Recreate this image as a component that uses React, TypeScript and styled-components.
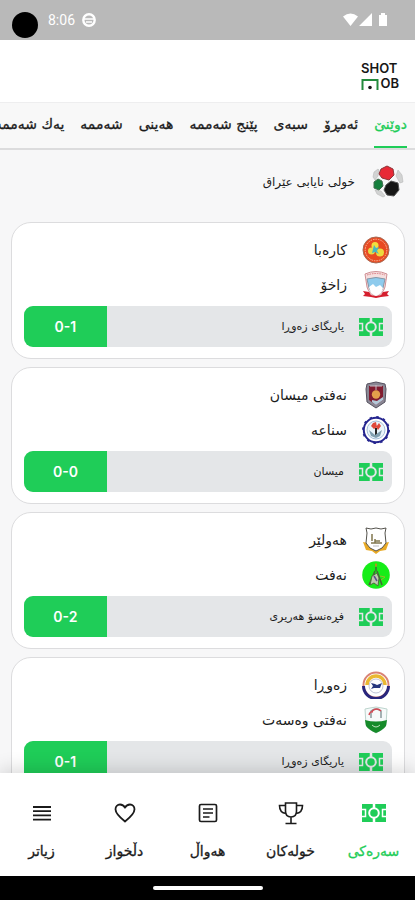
import React from "react";
import styled, { createGlobalStyle } from "styled-components";

const GREEN = "#1fcd58";

const GlobalStyle = createGlobalStyle`
  * { box-sizing: border-box; }
  body { margin: 0; background: #f7f7f8; font-family: "DejaVu Sans", "Noto Sans", sans-serif; color: #1b1b1b; }
  button { font: inherit; color: inherit; background: none; border: 0; padding: 0; cursor: pointer; }
`;

const Screen = styled.div`
  display: flex;
  flex-direction: column;
  height: 100vh;
  overflow: hidden;
`;

const StatusBar = styled.div`
  display: flex;
  align-items: center;
  flex: none;
  height: 40px;
  padding: 0 26px 0 12px;
  background: #b9b9b9;
  color: #fff;
  font: 14px/20px Roboto, sans-serif;
`;
const Camera = styled.span`
  width: 26px;
  height: 26px;
  margin: 9px 10px 0 0;
  border-radius: 50%;
  background: #000;
`;
const Clock = styled.time`
  margin-right: 7px;
`;
const SystemIcons = styled.span`
  display: flex;
  margin-left: auto;
`;

const Header = styled.header`
  display: flex;
  align-items: center;
  flex: none;
  height: 63px;
  padding: 10px 16px 0;
  background: #fff;
  border-bottom: 1px solid #eeeeef;
`;
const Brand = styled.h1`
  display: flex;
  flex-direction: column;
  width: 38px;
  margin: 0;
  direction: ltr;
  font: 600 13px/15px Inter, sans-serif;
  color: #171717;
`;
const BrandLine = styled.span`
  display: flex;
  align-items: center;
  justify-content: space-between;
`;

const Tabs = styled.nav`
  display: flex;
  flex: none;
  gap: 16px;
  height: 47px;
  padding: 0 8px;
  overflow: hidden;
  background: #f8f8f8;
  border-bottom: 2px solid #dcdcdd;
`;
const Tab = styled.button<{ $active?: boolean }>`
  flex: none;
  height: 45px;
  padding-bottom: 3px;
  white-space: nowrap;
  font-size: 14px;
  -webkit-text-stroke: 0.3px;
  ${(p) => p.$active && `color: ${GREEN}; box-shadow: inset 0 -2px ${GREEN};`}
`;

const Feed = styled.main`
  flex: 1;
  min-height: 0;
  overflow: hidden;
  padding: 0 10px 0 11px;
`;
const League = styled.h2`
  display: flex;
  align-items: center;
  gap: 16px;
  height: 72px;
  margin: 0;
  padding: 0 0 8px;
  font-size: 12px;
  font-weight: 400;
`;
const MatchList = styled.div`
  display: flex;
  flex-direction: column;
  gap: 8px;
`;
const Card = styled.article`
  padding: 9px 12px 11px;
  background: #fff;
  border: 1px solid #dcdcde;
  border-radius: 20px;
`;
const Team = styled.div`
  display: flex;
  align-items: center;
  gap: 15px;
  height: 35px;
  padding: 0 2px;
  font-size: 14px;
`;
const Result = styled.div`
  display: flex;
  align-items: center;
  gap: 14px;
  height: 41px;
  margin-top: 4px;
  padding-right: 8px;
  overflow: hidden;
  background: #e4e6e8;
  border-radius: 9px;
  font-size: 11px;
`;
const Score = styled.strong`
  display: grid;
  place-items: center;
  align-self: stretch;
  width: 23%;
  margin-right: auto;
  background: ${GREEN};
  color: #fff;
  direction: ltr;
  font: 600 14px/20px Inter, sans-serif;
`;

const BottomNav = styled.nav`
  display: grid;
  grid-template-columns: repeat(5, 1fr);
  flex: none;
  height: 103px;
  background: #fff;
  box-shadow: 0 -3px 18px rgba(0, 0, 0, 0.16);
  position: relative;
`;
const NavItem = styled.button<{ $active?: boolean }>`
  display: flex;
  flex-direction: column;
  align-items: center;
  gap: 13px;
  padding-top: 27px;
  font-size: 14px;
  line-height: 24px;
  -webkit-text-stroke: 0.3px;
  ${(p) => p.$active && `color: ${GREEN};`}
`;
const GestureBar = styled.div`
  display: grid;
  place-items: center;
  flex: none;
  height: 24px;
  background: #000;
`;
const Handle = styled.span`
  width: 110px;
  height: 4px;
  border-radius: 2px;
  background: #fff;
`;

const PitchIcon = ({ line = "#e4e6e8" }: { line?: string }) => (
  <svg width="26" height="26" viewBox="0 0 26 26" fill="none" aria-hidden="true">
    <rect x="1" y="4" width="24" height="18" fill={GREEN} />
    <path d="M13 4v4M13 18v4" stroke={line} strokeWidth="2.5" />
    <path d="M1 9.500h3.500v7H1M25 9.500h-3.500v7H25" stroke={line} strokeWidth="1.500" />
    <circle cx="13" cy="13" r="4.800" stroke={line} strokeWidth="2" />
  </svg>
);

const TrophyIcon = () => (
  <svg width="26" height="26" viewBox="0 0 26 26" fill="none" stroke="currentColor" strokeWidth="1.6" aria-hidden="true">
    <path d="M7.500 3h11v8c0 3.500-2 6-5.500 6s-5.500-2.500-5.500-6zM7.500 5.500H1.500c0 4.500 2 7.500 6.500 8M18.500 5.500h6c0 4.500-2 7.500-6.500 8M13 17v6M7.500 23.500h11" />
  </svg>
);
const NewsIcon = () => (
  <svg width="26" height="26" viewBox="0 0 26 26" fill="none" stroke="currentColor" strokeWidth="1.7" aria-hidden="true">
    <rect x="4.500" y="4.500" width="17" height="17" rx="1.500" />
    <path d="M8 9h10M8 13h10M8 17h6.500" />
  </svg>
);
const HeartIcon = () => (
  <svg width="26" height="26" viewBox="0 0 26 26" fill="none" stroke="currentColor" strokeWidth="1.8" strokeLinejoin="round" aria-hidden="true">
    <path d="M13 21.500C6 16 3.500 13 3.500 9.300 3.500 6.500 5.500 4.500 8 4.500c2.200 0 4 1.300 5 3.200 1-1.900 2.800-3.200 5-3.200 2.500 0 4.500 2 4.500 4.800 0 3.700-2.500 6.700-9.500 12.200z" />
  </svg>
);
const MoreIcon = () => (
  <svg width="26" height="26" viewBox="0 0 26 26" stroke="currentColor" strokeWidth="1.8" aria-hidden="true">
    <path d="M4 7h18M4 11.200h18M4 15.400h18M4 19.600h18" />
  </svg>
);

const LeagueBall = () => (
  <svg width="34" height="36" viewBox="0 0 34 36" aria-hidden="true">
    <g fill="#d2d3d3" stroke="#b0b0b0" strokeWidth=".5">
      <path d="M2 13 3 8l4-3 1 1-1 6-3 4zM27 6l4 5 1 7-3 1-4-7zM4 26l6 1 4 5-2 1-6-3z" />
    </g>
    <path d="m10 5 6-3 6 3 1 6-5 5-7-2-3-4z" fill="#e82936" stroke="#8b3438" />
    <path d="m3 18 4-3 4 2 1 5-4 4-5-2z" fill="#15803d" stroke="#436e50" />
    <path d="m15 21 5-4 7 2 1 7-5 6-7-1-3-5z" fill="#161616" stroke="#555" />
  </svg>
);

type CrestName = "karaba" | "zakho" | "maysan" | "sinaa" | "erbil" | "naft" | "zawraa" | "wasat";

const crestArt: Record<CrestName, React.ReactNode> = {
  karaba: (
    <>
      <circle cx="14" cy="14" r="13" fill="#e94a21" stroke="#a66a55" />
      <circle cx="14" cy="14" r="10.800" fill="none" stroke="#f7b99f" strokeDasharray="1.500 1" />
      <circle cx="13" cy="9.500" r="3.500" fill="#f1df3e" />
      <circle cx="9.500" cy="15" r="3.500" fill="#e5db48" />
      <circle cx="18" cy="16.500" r="4" fill="#ecd93f" />
      <path d="m12 9 2 3 3-1-2 4 2 3-4-2-3 1 1-4z" fill="#48b7c1" />
    </>
  ),
  zakho: (
    <>
      <path d="M3 3q11-5 22 0l-2 13q-2 7-9 10-7-3-9-10z" fill="#f5dede" stroke="#cf8f94" />
      <path d="M5 8q9-3 18 0l-2 9q-2 5-7 7-5-2-7-7z" fill="#8ecbed" stroke="#8596a5" />
      <path d="M5 4q9-3 18 0" fill="none" stroke="#d87880" strokeDasharray="1.500 1" />
      <path d="m7 16 4-3 3 3 4-2 3 3-2 5-5 3-5-3z" fill="#fff" />
      <path d="m1 20 6 1 2 3q5 2 10 0l2-3 6-1-2 3 2 2-8 1-5 1-5-1-8-1 2-2z" fill="#d51f2e" />
    </>
  ),
  maysan: (
    <>
      <path d="M5 3 14 1l9 2 1 5-1 13-9 6-9-6L4 8z" fill="#8a8794" stroke="#55515f" />
      <path d="M7 5h14v14l-7 5-7-5z" fill="#811c30" />
      <path d="M8 5h12M14 4v5" stroke="#c7bac4" />
      <circle cx="14" cy="13.500" r="4.200" fill="#e4a04b" />
      <path d="m10 19 5 1 6-4v3l-7 5-4-3z" fill="#b3c9d9" />
    </>
  ),
  sinaa: (
    <>
      <circle cx="14" cy="14" r="12.200" fill="#fff" stroke="#25258f" strokeWidth="2" />
      <circle cx="14" cy="14" r="13.200" fill="none" stroke="#25258f" strokeWidth="1.500" strokeDasharray="2.500 4.400" />
      <circle cx="14" cy="14" r="9" fill="#eaf4fb" stroke="#a4bed8" />
      <path d="m14 11 3-4 2 3-3 4zM11 7l3-1 1 5-3 2-3-3z" fill="#df493b" />
      <path d="M14 12v8" stroke="#252525" strokeWidth="2" />
      <path d="m7 14 6 5 7-5-2 6-4 2-5-2z" fill="#809eae" />
    </>
  ),
  erbil: (
    <>
      <path d="m1 16 5 1 8 6 8-6 5-1-3 8-6 1-4 3-4-3-6-1z" fill="#e9aa25" />
      <path d="m4 2 5 1 5-1 5 1 5-1-1 5 1 10-4 5-6 3-6-3-4-5 1-10z" fill="#fff" stroke="#55534d" />
      <path d="M9 17h11M10 15V8M13 17v-4M13 15h5" stroke="#81774d" strokeWidth="1.500" />
      <path d="M11 20h6" stroke="#bbb" />
    </>
  ),
  naft: (
    <>
      <circle cx="14" cy="14" r="13.800" fill="#16ed18" />
      <path d="M14 6v4M13 10 7 24M15 10l5 14" stroke="#446536" strokeWidth="1.500" />
      <path d="M14 6q-2-2 0-4 2 2 0 4" fill="#cc8520" />
      <path d="m10 15 5-3 2 5-1 8-4-3-4 2z" fill="#bdc9ae" stroke="#4b6f3a" />
      <path d="m18 15 5 1-4 3" fill="none" stroke="#98bd28" />
      <path d="m12 15 3 5" stroke="#5d4b8c" strokeWidth="1.500" />
    </>
  ),
  zawraa: (
    <>
      <circle cx="14" cy="14" r="12.500" fill="#fff" stroke="#d98274" strokeWidth="2" />
      <path d="M1.500 15a12.500 12.500 0 0 0 25 0" fill="none" stroke="#29267c" strokeWidth="3" />
      <path d="M5 14a9 9 0 0 1 18 0" fill="none" stroke="#eab832" strokeWidth="3.500" />
      <circle cx="14" cy="15" r="7" fill="#fff" stroke="#8187ad" strokeWidth=".5" />
      <path d="m9 12 4 1 2 1 5-2-2 5h-6l-3 1 2-3z" fill="#27377e" />
    </>
  ),
  wasat: (
    <>
      <path d="m3 3 5-1 6-1 6 1 5 1-1 16q-3 5-10 8-7-3-10-8z" fill="#f6fafa" stroke="#bdd4cd" />
      <path d="M3 14q11 3 22 0l-1 6q-3 4-10 7-7-3-10-7z" fill="#168b2a" />
      <path d="M9 12V5q5-4 10 0v7" fill="none" stroke="#8b999d" strokeWidth="1.500" />
      <path d="M10 5q5-4 9 0M7 9q1-4 4-3" fill="none" stroke="#d44b54" strokeWidth="1.500" />
      <path d="M10 19q4 4 8 0" stroke="#bfe0bc" fill="none" />
    </>
  ),
};

const Crest = ({ name }: { name: CrestName }) => (
  <svg width="28" height="28" viewBox="0 0 28 28" aria-hidden="true">{crestArt[name]}</svg>
);

const days = ["دوێنێ", "ئەمڕۆ", "سبەی", "پێنج شەممە", "هەینی", "شەممە", "یەك شەممە"];

interface Match {
  teams: [string, CrestName][];
  venue: string;
  score: string;
}
const matches: Match[] = [
  { teams: [["کارەبا", "karaba"], ["زاخۆ", "zakho"]], venue: "یاریگای زەوڕا", score: "0-1" },
  { teams: [["نەفتی میسان", "maysan"], ["سناعە", "sinaa"]], venue: "میسان", score: "0-0" },
  { teams: [["هەولێر", "erbil"], ["نەفت", "naft"]], venue: "فڕەنسۆ هەریری", score: "0-2" },
  { teams: [["زەوڕا", "zawraa"], ["نەفتی وەسەت", "wasat"]], venue: "یاریگای زەوڕا", score: "0-1" },
];

const navItems = [
  { label: "سەرەکی", icon: <PitchIcon line="#fff" /> },
  { label: "خولەکان", icon: <TrophyIcon /> },
  { label: "هەواڵ", icon: <NewsIcon /> },
  { label: "دڵخواز", icon: <HeartIcon /> },
  { label: "زیاتر", icon: <MoreIcon /> },
];

export default function App() {
  return (
    <>
      <GlobalStyle />
      <Screen dir="rtl" lang="ckb">
        <StatusBar dir="ltr">
          <Camera />
          <Clock>8:06</Clock>
          <svg width="14" height="14" viewBox="0 0 14 14" aria-hidden="true">
            <circle cx="7" cy="7" r="5.700" fill="none" stroke="#fff" strokeWidth="2.400" />
            <path d="M2 6h10M4 9h6" stroke="#fff" strokeWidth="1.700" />
          </svg>
          <SystemIcons>
            <svg width="46" height="14" viewBox="0 0 46 14" fill="#fff" aria-hidden="true">
              <path d="M0 3.500Q7.500-2.500 15 3.500L7.500 13zM29 0v13H16zM36 2h2V0h4v2h2v11h-8z" />
            </svg>
          </SystemIcons>
        </StatusBar>

        <Header>
          <Brand aria-label="SHOTMOB">
            <BrandLine>SHOT</BrandLine>
            <BrandLine>
              <svg width="18" height="12" viewBox="0 0 18 12" aria-hidden="true">
                <path d="M1.500 12V2h15v10" fill="none" stroke="#238b3d" strokeWidth="2" />
                <circle cx="9" cy="9.500" r="1.800" fill="#171717" />
              </svg>
              OB
            </BrandLine>
          </Brand>
        </Header>

        <Tabs>
          {days.map((day, i) => (
            <Tab key={day} $active={i === 0}>{day}</Tab>
          ))}
        </Tabs>

        <Feed>
          <League>
            <LeagueBall />
            خولی نایابی عێراق
          </League>
          <MatchList>
            {matches.map((match) => (
              <Card key={match.teams[0][0]}>
                {match.teams.map(([name, crest]) => (
                  <Team key={name}>
                    <Crest name={crest} />
                    {name}
                  </Team>
                ))}
                <Result>
                  <PitchIcon />
                  {match.venue}
                  <Score>{match.score}</Score>
                </Result>
              </Card>
            ))}
          </MatchList>
        </Feed>

        <BottomNav>
          {navItems.map((item, i) => (
            <NavItem key={item.label} $active={i === 0}>
              {item.icon}
              {item.label}
            </NavItem>
          ))}
        </BottomNav>
        <GestureBar>
          <Handle />
        </GestureBar>
      </Screen>
    </>
  );
}
